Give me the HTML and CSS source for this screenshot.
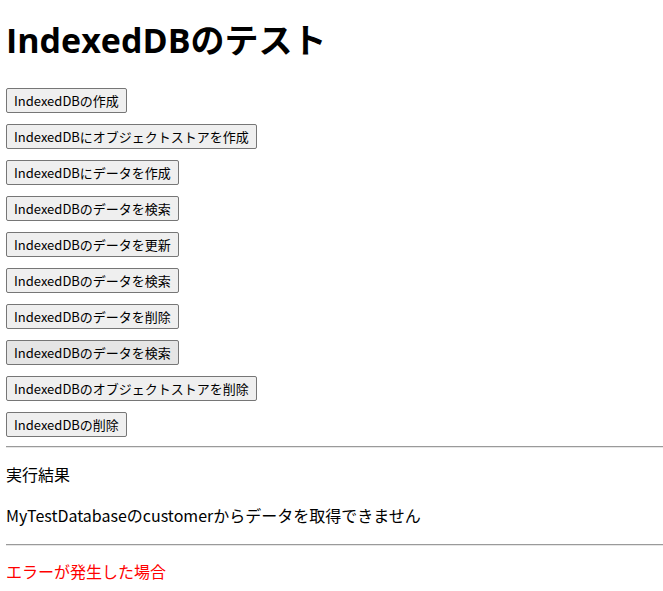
FILE: index.html
```html
<!DOCTYPE html>
<html lang="ja">
  <head>
    <meta charset="UTF-8" />
    <meta name="viewport" content="width=device-width, initial-scale=1.0" />
    <title>IndexedDBのテスト</title>
    <link rel="stylesheet" href="styles.css">
  </head>
  <body>
    <h1>IndexedDBのテスト</h1>

    <div class="actions">
      <button id="createDbBtn">IndexedDBの作成</button>
      <button id="createStoreBtn">IndexedDBにオブジェクトストアを作成</button>
      <button id="addBtn">IndexedDBにデータを作成</button>
      <button id="getBtn">IndexedDBのデータを検索</button>
      <button id="putBtn">IndexedDBのデータを更新</button>
      <button id="getBtn2">IndexedDBのデータを検索</button>
      <button id="deleteBtn">IndexedDBのデータを削除</button>
      <button id="getBtn3" class="active">IndexedDBのデータを検索</button>
      <button id="deleteStoreBtn">IndexedDBのオブジェクトストアを削除</button>
      <button id="deleteDbBtn">IndexedDBの削除</button>
    </div>

    <hr />
    <p class="label">実行結果</p>
    <p id="result" class="result">MyTestDatabaseのcustomerからデータを取得できません</p>
    <hr />
    <p id="error" class="error">エラーが発生した場合</p>
  </body>
</html>
```

FILE: styles.css
```css
* {
  box-sizing: border-box;
}

body {
  margin: 0 0 0 6px;
  background: #fff;
  color: #000;
  font-family: "Noto Sans CJK JP", "Noto Sans", sans-serif;
  font-size: 16px;
}

h1 {
  font-family: "Open Sans", "Noto Sans CJK JP", sans-serif;
  font-size: 34px;
  font-weight: bold;
  line-height: 40px;
  margin: 20px 0 28px;
}

.actions {
  display: flex;
  flex-direction: column;
  align-items: flex-start;
  gap: 11px;
}

.actions button {
  height: 25px;
  padding: 0 7px;
  font-family: "Noto Sans CJK JP", "Noto Sans", sans-serif;
  font-size: 13px;
  color: #000;
  background: #efefef;
  border: 1px solid #767676;
  border-radius: 2px;
}

.actions button.active {
  background: #e5e5e5;
}

hr {
  margin: 9px 0 0;
  border: 0;
  border-top: 1px solid #9a9a9a;
  border-bottom: 1px solid #e6e6e6;
}

p {
  margin: 0;
  line-height: 24px;
}

.label {
  margin-top: 14px;
}

.result {
  margin-top: 17px;
}

.result + hr {
  margin-top: 17px;
}

.error {
  margin-top: 13px;
  color: #f00;
}
```
